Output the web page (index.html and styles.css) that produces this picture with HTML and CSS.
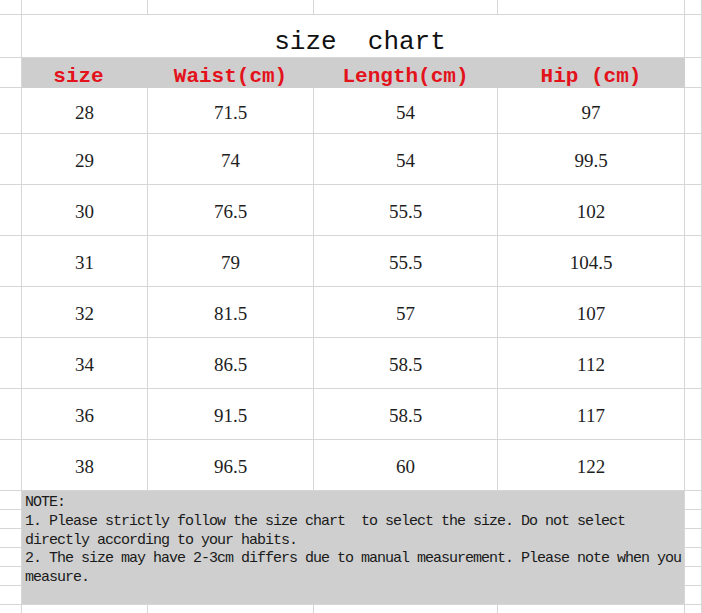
FILE: index.html
```html
<!DOCTYPE html>
<html lang="en">
<head>
<meta charset="utf-8">
<title>size chart</title>
<link rel="stylesheet" href="styles.css">
</head>
<body>
<div class="sheet">
  <div class="c"></div><div class="c"></div><div class="c"></div><div class="c"></div><div class="c"></div><div class="c"></div>

  <div class="c"></div><div class="c title">size  chart</div><div class="c"></div>

  <div class="c"></div><div class="c hd hd-size">size</div><div class="c hd">Waist(cm)</div><div class="c hd">Length(cm)</div><div class="c hd">Hip (cm)</div><div class="c"></div>

  <div class="c"></div><div class="c num">28</div><div class="c num">71.5</div><div class="c num">54</div><div class="c num">97</div><div class="c"></div>
  <div class="c"></div><div class="c num">29</div><div class="c num">74</div><div class="c num">54</div><div class="c num">99.5</div><div class="c"></div>
  <div class="c"></div><div class="c num">30</div><div class="c num">76.5</div><div class="c num">55.5</div><div class="c num">102</div><div class="c"></div>
  <div class="c"></div><div class="c num">31</div><div class="c num">79</div><div class="c num">55.5</div><div class="c num">104.5</div><div class="c"></div>
  <div class="c"></div><div class="c num">32</div><div class="c num">81.5</div><div class="c num">57</div><div class="c num">107</div><div class="c"></div>
  <div class="c"></div><div class="c num">34</div><div class="c num">86.5</div><div class="c num">58.5</div><div class="c num">112</div><div class="c"></div>
  <div class="c"></div><div class="c num">36</div><div class="c num">91.5</div><div class="c num">58.5</div><div class="c num">117</div><div class="c"></div>
  <div class="c"></div><div class="c num">38</div><div class="c num">96.5</div><div class="c num">60</div><div class="c num">122</div><div class="c"></div>

  <div class="c"></div>
  <div class="c note">
    <div class="note-line">NOTE:</div>
    <div class="note-line">1. Please strictly follow the size chart  to select the size. Do not select</div>
    <div class="note-line">directly according to your habits.</div>
    <div class="note-line">2. The size may have 2-3cm differs due to manual measurement. Please note when you</div>
    <div class="note-line">measure.</div>
  </div>
  <div class="c"></div>
  <div class="c"></div><div class="c"></div>
  <div class="c"></div><div class="c"></div>
  <div class="c"></div><div class="c"></div>
  <div class="c"></div><div class="c"></div>
  <div class="c"></div><div class="c"></div>

  <div class="c last"></div><div class="c last"></div><div class="c last"></div><div class="c last"></div><div class="c last"></div><div class="c last"></div>
</div>
</body>
</html>
```

FILE: styles.css
```css
* {
  box-sizing: border-box;
}

html,
body {
  margin: 0;
  padding: 0;
  background: #ffffff;
}

body {
  width: 702px;
  height: 613px;
  overflow: hidden;
}

.sheet {
  display: grid;
  grid-template-columns: 22px 126px 166px 184px 187px 17px;
  grid-template-rows: 15px 43px 30px 46px repeat(7, 51px) repeat(6, 19px) 8px;
}

.c {
  border-right: 1px solid #d6d6d6;
  border-bottom: 1px solid #d6d6d6;
}

.last {
  border-bottom: 0;
}

.title {
  grid-column: span 4;
  display: flex;
  align-items: flex-end;
  justify-content: center;
  padding: 0 0 2px 14px;
  font-family: "Liberation Mono", monospace;
  font-size: 26px;
  line-height: 26px;
  color: #111111;
  white-space: pre;
}

.hd {
  display: flex;
  align-items: center;
  justify-content: center;
  padding-top: 7px;
  background: #cecece;
  border-right-color: #cecece;
  border-bottom-color: #cecece;
  font-family: "Liberation Mono", monospace;
  font-weight: bold;
  font-size: 21px;
  color: #e3121b;
  white-space: pre;
}

.hd-size {
  padding-right: 12px;
}

.num {
  display: flex;
  align-items: center;
  justify-content: center;
  padding-top: 4px;
  font-family: "Liberation Serif", serif;
  font-size: 19px;
  color: #1e1e1e;
}

.note {
  grid-column: span 4;
  grid-row: span 6;
  padding: 3px 0 0 3px;
  background: #cfcfcf;
  font-family: "Liberation Mono", monospace;
  font-size: 15px;
  line-height: 18.8px;
  letter-spacing: -1px;
  color: #1a1a1a;
}

.note-line {
  white-space: pre;
}
```
